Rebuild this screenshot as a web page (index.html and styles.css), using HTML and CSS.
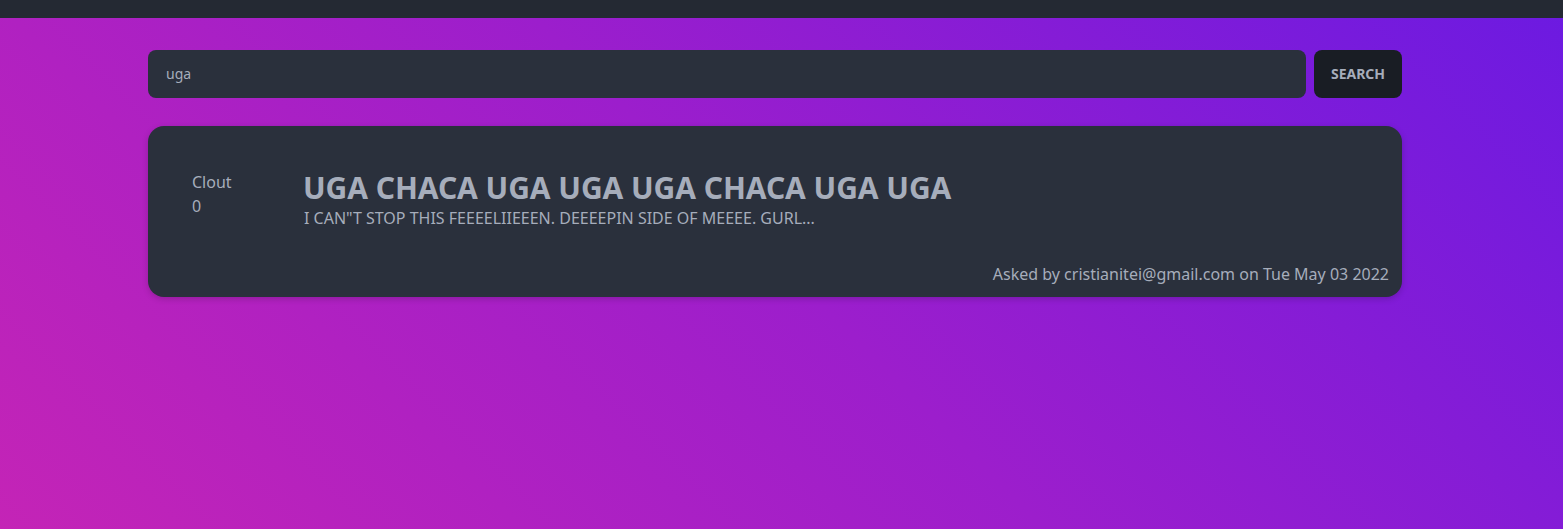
FILE: index.html
```html
<!DOCTYPE html>
<html>
<head>
<meta charset="utf-8">
<link rel="stylesheet" href="styles.css">
</head>
<body>
<div class="navbar"></div>
<main class="page">
  <form class="search">
    <div class="search-input">uga</div>
    <button class="search-btn" type="button">Search</button>
  </form>
  <div class="card">
    <div class="card-main">
      <div class="clout">
        <div>Clout</div>
        <div>0</div>
      </div>
      <div class="question">
        <h2 class="title">UGA CHACA UGA UGA UGA CHACA UGA UGA</h2>
        <p class="desc">I CAN"T STOP THIS FEEEELIIEEEN. DEEEEPIN SIDE OF MEEEE. GURL...</p>
      </div>
    </div>
    <div class="card-footer">Asked by cristianitei@gmail.com on Tue May 03 2022</div>
  </div>
</main>
</body>
</html>
```

FILE: styles.css
```css
* { box-sizing: border-box; }
html, body { margin: 0; padding: 0; }
body {
  min-height: 529px;
  font-family: "Noto Sans", "Open Sans", sans-serif;
  color: #a6adbb;
  background: linear-gradient(45deg, #c424b6 0%, #9c1ecc 50%, #6c1ae1 100%);
}
.navbar {
  height: 18px;
  background: #242933;
}
.page {
  width: 1254px;
  margin-left: 148px;
  padding-top: 32px;
}
.search {
  display: flex;
  gap: 8px;
  margin: 0;
}
.search-input {
  flex: 1;
  height: 48px;
  background: #2a303c;
  border-radius: 8px;
  padding: 0 18px;
  font-size: 14px;
  line-height: 48px;
  color: #a6adbb;
}
.search-btn {
  width: 88px;
  height: 48px;
  border: none;
  border-radius: 8px;
  background: #191d24;
  color: #a6adbb;
  font-family: inherit;
  font-size: 14px;
  font-weight: 700;
  text-transform: uppercase;
  letter-spacing: 0;
  padding: 0 0 2px 0;
}
.card {
  margin-top: 28px;
  background: #2a303c;
  border-radius: 16px;
  box-shadow: 0 2px 6px rgba(0,0,0,0.18);
  padding: 44px 13px 11px 44px;
}
.card-main {
  display: flex;
}
.clout {
  width: 112px;
  font-size: 16px;
  line-height: 24px;
}
.question { flex: 1; }
.title {
  margin: 0 0 0 -1px;
  font-size: 30px;
  line-height: 36px;
  font-weight: 700;
  letter-spacing: -0.06px;
  color: #a6adbb;
}
.desc {
  margin: 0;
  font-size: 16px;
  line-height: 24px;
}
.card-footer {
  margin-top: 32px;
  text-align: right;
  font-size: 16px;
  line-height: 24px;
}
```
